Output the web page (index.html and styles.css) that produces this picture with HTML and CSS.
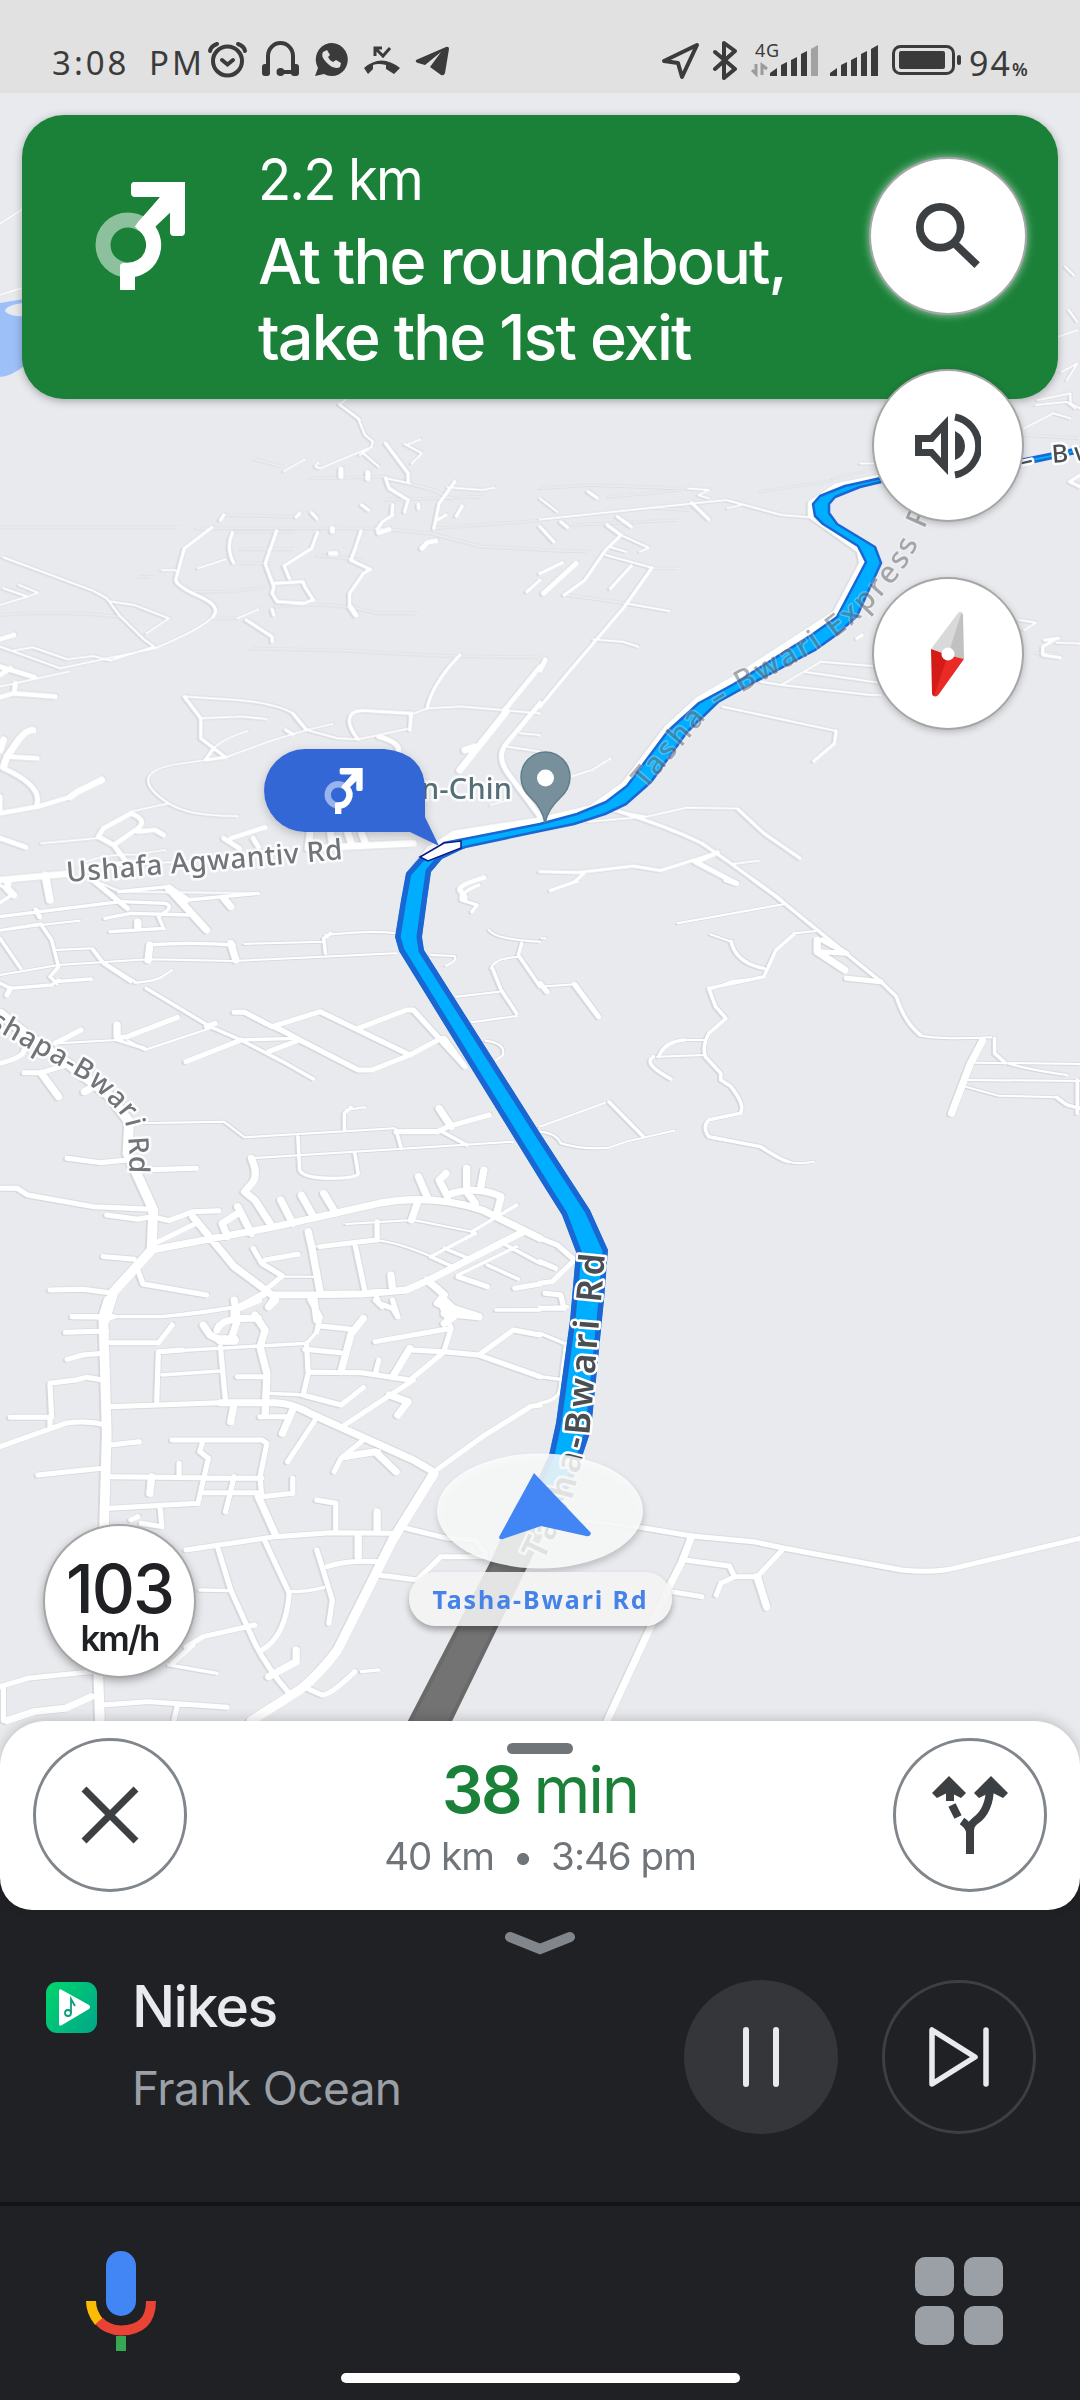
FILE: index.html
```html
<!DOCTYPE html>
<html lang="en">
<head>
<meta charset="utf-8">
<title>Navigation</title>
<link rel="stylesheet" href="styles.css">
</head>
<body>
<svg class="defs" width="0" height="0" aria-hidden="true">
  <symbol id="exit" viewBox="0 0 90 108">
    <path d="M33 88A25 25 0 0 1 33 38Q41 38 48 43" fill="none" stroke="#fff" stroke-opacity=".5" stroke-width="15"/>
    <path d="M33 88A25 25 0 0 0 52 46L50 44L80 9" fill="none" stroke="#fff" stroke-width="15"/>
    <path d="M41 45Q41 43 43 40L66 15H82V24L60 45L50 54Z" fill="#fff"/>
    <path d="M39 0H90V50Q90 54 86 54H79Q75 54 75 50V15H40Q36 15 36 11V4Q36 0 39 0Z" fill="#fff"/>
    <path d="M25 108V84q0-3 4-3h11v27z" fill="#fff"/>
  </symbol>
</svg>
<div class="phone">
  <header class="status">
    <span class="clock">3:08 PM</span>
    <svg class="status-left" viewBox="206 38 246 42">
      <g fill="none" stroke="#3b3b3b" stroke-width="4" stroke-linecap="round">
        <circle cx="227.500" cy="61" r="14.500"/><path d="M222 60l5.500 4.500L233 60M210 51q1-5 7-7M245 51q-1-5-7-7"/>
        <path d="M268 72V56a12.500 13 0 0 1 25 0v16M282 72h10"/>
      </g>
      <g fill="#3b3b3b">
        <rect x="262" y="64" width="8" height="12" rx="3"/><rect x="291" y="64" width="8" height="12" rx="3"/><circle cx="280.500" cy="72" r="4"/>
        <path d="M315 76l3-8A16 16.500 0 1 1 324 74z"/>
        <path d="M364 68q17-15 36 0l-6 6-8-5v-4q-8-2-13 0v4l-5 5z"/>
        <path d="M416 60Q415 62 418 63L425 65L441 52L430 67L441 75Q444 76 445 73L449 49Q449 46 446 47Z"/>
      </g>
      <path d="M323 52q-3 4 4 11t13 4l1-4-5-3-3 2q-4-2-5-5l2-2-3-5z" fill="#e1e1e1"/>
      <path d="M382 48h-7v8M375 48l8 8 7-8" fill="none" stroke="#3b3b3b" stroke-width="3"/>
    </svg>
    <svg class="status-right" viewBox="660 38 302 42">
      <path d="M664 61l33-16-15 32-4-14z" fill="none" stroke="#3b3b3b" stroke-width="4" stroke-linejoin="round"/>
      <path d="M715 52l20 17-11 9V43l11 8-20 18" fill="none" stroke="#3b3b3b" stroke-width="4" stroke-linejoin="round" stroke-linecap="round"/>
      <text class="net" x="755" y="57" textLength="24">4G</text>
      <path d="M756 64v10l-4-4M762 75V65l5 4" fill="none" stroke="#9b9b9b" stroke-width="3"/>
      <g fill="#3b3b3b">
        <path d="M770 76v-3l7-5v8zM781 76V65l6-3v14zM791 76V60l6-3v19zM801 76V54l6-3v25z"/>
        <path d="M811 76V49l7-4v31z" fill="#a2a2a2"/>
        <path d="M830 76v-3l7-5v8zM841 76V65l6-3v14zM851 76V60l6-3v19zM861 76V54l6-3v25zM871 76V49l7-4v31z"/>
        <rect x="899" y="51" width="46" height="18" rx="2"/><rect x="957" y="55" width="4" height="10" rx="2"/>
      </g>
      <rect x="893.500" y="46.500" width="60" height="27" rx="7" fill="none" stroke="#3b3b3b" stroke-width="3"/>
    </svg>
    <span class="battery">94<small>%</small></span>
  </header>

  <main class="map">
    <svg class="canvas" viewBox="0 93 1080 1707">
      <path d="M0 303L24 299V366Q12 376 0 377Z" fill="#9dc0f9"/>
      <path d="M24 303Q6 305 5 311Q9 317 24 316Z" fill="#e8eaee"/>
      <g class="roads">
        <!-- north-west -->
        <g transform="translate(0 0) scale(.3444 .3333)">
          <path class="a" d="M0 670L64 628M0 885L60 865M1005 1198L985 1213L1020 1240L1045 1260"/>
        </g>
        <g transform="translate(0 400) scale(.3444 .3333)">
          <path class="f" d="M0 382H520M570 385H1090L1250 400L1400 440L1568 448M740 178L820 200M900 235L1120 230M650 345L860 350M700 490H790M700 448H860M540 575Q680 580 780 560M0 645Q180 630 350 650M620 655H690M800 620Q960 600 1100 640H1210M730 745L1000 752L1290 768L1568 772M1185 250L1260 270L1320 300M1260 385L1568 362M1120 300L1400 290M400 530H440M680 395H860M1050 480L920 465"/>
          <path class="a" d="M825 213L885 178M925 188Q905 200 930 205L1080 140M1175 132L1225 160L1195 190M1180 135L1220 118M1300 262L1400 270L1435 263M1055 160L1100 200M1190 250L1120 235M985 13L1040 55L1060 105L1083 125L1078 140L1045 165M575 505L655 478M470 510H510M10 472L270 572L310 595L350 650L420 720L448 740L320 782L270 768L195 778L95 742L40 752M320 605L390 615L490 655L425 700M0 740L175 805L450 745Q580 690 618 650M0 860L200 815M10 565L80 590L110 578L55 555M0 615L80 590M690 655L750 628M535 890L690 900Q800 910 850 940L890 990L980 1015L1040 1018L1190 985V945L1240 925L1340 920L1568 940M580 955L700 950L775 957M595 1080L660 1070L780 1025L890 990L965 972M620 1045Q640 1020 718 993M600 1080L500 1095Q430 1110 430 1140T490 1210Q550 1250 690 1248M490 1210L380 1235M120 1330L280 1315M0 1435L190 1420M250 1385Q320 1360 390 1365L480 1350M370 1395L760 1370M270 1440L350 1475L490 1460L540 1490M1320 1300L1440 1290M1510 1000L1568 1005M1470 1040L1568 1055M1425 1215L1480 1200M350 1475L750 1480"/>
          <path class="b" d="M1120 130L1185 220V243M1120 235L1130 265L1185 300L1175 335M1260 385L1275 310L1320 245M1270 360L1295 345M1325 348L1342 318M1215 312V325M1050 315L1070 330M1140 315L1138 340M1140 345L1110 365L1095 388M640 360L650 345M860 350L870 340M905 338L920 355M615 382L535 445L510 540Q515 560 580 590T618 650M675 398Q655 440 678 488M803 393L770 490L795 560L790 580L805 605L880 610L910 600L885 560L880 545L800 550M922 397L905 445L825 497L840 535M1048 393L1030 450L1018 480L1075 508L1055 520L1015 580V620M535 890L583 955V1015L655 1072L600 1080M620 1045L595 1080M890 990L850 940M830 990L850 1003M1040 1018Q1010 980 1015 955T1060 932L1190 940M1240 925Q1255 850 1335 765M1195 940L1190 990M715 660L790 710V725M1568 540L1530 575M790 628L795 645"/>
          <path class="c" d="M990 207V230M1068 217V236M965 385V393M960 460H975M1225 445L1240 428L1265 423M1100 398L1130 388M1018 622L1033 645M0 800L100 832M0 825L30 805M0 892L40 880L160 890M40 880L45 850M0 718L40 705M380 1240Q430 1260 400 1285L330 1335L285 1310L300 1285L380 1240M330 1335L370 1390M400 1295L450 1290L475 1305M650 1315L695 1345M670 1315L770 1282M735 1315L750 1340M0 1315L75 1342M1465 930L1568 800M1568 910L1470 1030Q1440 1070 1475 1120L1568 1250M1100 1010Q1170 1030 1155 1060L1130 1075M1335 1470L1350 1490M1405 1433Q1345 1450 1335 1465L1350 1500M0 1240L110 1220L205 1190M10 1105Q130 1160 105 1220M20 1070L108 1075M0 1190V1240M240 1400L370 1390"/>
          <path class="d" d="M1335 1110L1470 935M1350 1050L1380 1040M10 1100L20 1070L40 1040Q70 990 95 990M0 1050L10 1020M205 1190L225 1175L295 1140M0 1440L190 1422M130 1425L145 1500M25 1440L20 1465L40 1485M490 1465L540 1500M900 1300L895 1345L1200 1330M960 1300L965 1330M1010 1300L1020 1330M1050 1300L1060 1325"/>
          <path class="e" d="M1200 1500V1420L1250 1350L1320 1305L1568 1265"/>
        </g>
        <!-- north-east -->
        <g transform="translate(540 0) scale(.3444 .3333)">
          <path class="a" d="M1525 800L1550 825M1535 930L1560 965M1505 1010L1560 990M1515 1115L1560 1090L1530 1140M1445 1200L1540 1180V1210L1568 1225"/>
        </g>
        <g transform="translate(540 400) scale(.3444 .3333)">
          <path class="f" d="M0 265L150 255L400 265M200 290L320 280L440 265M340 325L440 330M100 375L400 360M0 450L140 455M330 505H400M80 585L250 610M640 275L860 240M850 235L985 205M1405 105L1568 115M1500 760H1440"/>
          <path class="a" d="M0 358L540 300L700 345L790 352M430 265L490 270L460 285L490 295M0 295L50 335M545 325L590 313M250 610L375 633M155 718L240 725L285 740M200 440L250 455M235 405L315 443L290 455M190 465L325 503M640 845L700 855L815 785L990 800M700 855L960 885H990M530 920L860 993M765 815L1000 850M200 1230L310 1250L425 1223L575 1225M140 1265L310 1250M560 1392L635 1382M90 1130L150 1110L205 1075M1405 85L1490 40L1540 55M1440 15L1530 5L1555 25M1405 690L1440 668L1390 660M1500 728L1568 730M930 190H975"/>
          <path class="b" d="M0 920L80 820L245 620L325 503M70 585L130 540L190 450L235 405L195 375M0 520L65 488M205 565L265 497M0 380L40 425M225 350L265 380M140 275L165 293M440 308L490 358M60 365L80 382M230 1235Q370 1280 470 1330L540 1380L700 1500M575 1228L650 1300L755 1375M860 993L855 1030L795 1083M1568 225L1538 245L1568 260M1500 715L1460 740V765L1510 773M1505 715L1465 720M0 1415L110 1418L270 1398L350 1412L515 1358M130 1418L100 1445L30 1472M920 715L935 705"/>
          <path class="c" d="M10 580L105 490M0 810L15 780M455 1385L515 1358M450 1385L570 1450"/>
          <path class="d" d="M990 232L860 260L788 310V345L930 450L937 490L860 640L560 840L460 900L370 985L245 1155L150 1225L0 1262"/>
        </g>
        <!-- west -->
        <g transform="translate(0 880) scale(.3444 .3333)">
          <path class="a" d="M710 192L940 185M0 285L170 255L430 238L680 243L1150 220M945 165Q1080 150 1150 160M300 245L400 310M390 308Q450 305 470 290L500 270M160 210L270 205L300 245M0 152L120 135L230 122M170 490L340 480M1325 350L1450 335M1370 427L1500 408M1250 225L1320 228Q1330 240 1295 257M1410 482Q1470 490 1460 525L1440 540M395 730L650 725L710 772L1145 745M730 835L1490 785M1180 750H1270M1425 265Q1435 235 1505 230M1420 150Q1440 180 1568 185M120 130L0 150M370 480L420 510L610 445M1005 1032L1200 1020L1370 1055M915 1100L1090 1080Q1180 1090 1310 1158M820 1190H920M1440 1290L1568 1288M320 1310L480 1308L680 1280M1005 690L1060 682"/>
          <path class="b" d="M0 110L350 65L480 70Q510 80 460 110L475 145L320 155M305 115L380 100L550 105M345 35L490 20L545 60L750 40M160 305L265 297M0 310L30 325L150 315L170 300M120 135L150 180L170 260L145 290L165 310M270 210L300 250L380 305M430 195Q550 185 680 195M945 220L940 175L960 160M425 325L610 440L700 480L830 550L910 597M700 480L860 475M790 440L850 470M340 480L420 505M1000 750V700L1020 682M1430 265L1455 330L1500 400M1515 190L1505 225L1568 320M865 770L870 870Q880 895 960 895T1040 880L1030 820M1150 750L1165 805M1275 750L1355 795M1390 15Q1330 40 1340 60L1385 75L1370 95M0 15L40 40L0 68M0 175L60 265M1370 1055L1500 975M1250 1130L1380 1060M1250 1130L1310 1158M1290 1105L1360 1135M1415 1155L1505 1197M1330 1185L1500 1100M1460 1090L1568 1150"/>
          <path class="c" d="M270 0L370 85M680 397H710L790 440L930 395L1190 525L1280 475M800 440L870 480L1040 570H1080L1190 525M1040 445L1180 390H1200L1350 560M540 545L700 480M780 515L870 480M160 490L235 450M340 475L370 470L515 412M70 578H120L210 550M195 835L290 848L370 840M410 870L570 865M0 925H50L80 945L270 980L440 988M310 1005L400 1018L440 1010L490 1022L560 995L635 992M450 1090L570 1030M300 1130L390 1138M145 1230L240 1228L330 1240M400 1170L415 1212L600 1245M210 1310H310M735 1105L760 1150L820 1188L770 1230M770 1140L865 1123M1150 755L1270 755L1300 740L1420 705M1030 1090L1060 1235M1095 1080V1025M930 1100L1090 1080M330 1310L300 1320M0 550Q80 530 70 500M1415 1220L1330 1190M1495 1225L1568 1212M1090 1240L1100 1270L1140 1285L1155 1310M600 440L625 430M1290 475L1350 560M105 90L115 110M20 345L30 325"/>
          <path class="d" d="M135 0L145 60M490 25L600 150M650 55L670 80M400 125V140M430 240L435 195M670 190L685 240M340 435V470M120 580L170 650M245 635L280 615M1275 685L1310 740M730 835Q750 880 735 905L710 935L740 960L790 1040M780 1280L800 1250M660 1070L645 1030L690 1000M730 1060L690 980M850 1030L815 960M910 1010L875 945M975 1000L940 940M1240 950L1215 890M1300 950L1275 900L1295 880M1380 970L1355 935V865M1395 925L1405 870M1300 945Q1380 915 1455 950L1440 1010M1195 1020L1215 960M895 1055L905 1100L930 1240M1140 1230L1135 1185M440 1110L800 1040L1100 970Q1250 940 1400 990L1568 1075M560 1010L680 1160L790 1245L1050 1242L1180 1230Q1250 1200 1340 1150L1520 1055M1240 1200L1290 1245L1270 1270L1390 1310M910 1245L920 1320M680 1290L770 1240M680 1290V1320"/>
          <path class="e" d="M0 400Q80 470 190 545L320 650L375 725L370 820L445 990L440 1110L330 1235L305 1320"/>
        </g>
        <!-- east -->
        <g transform="translate(540 880) scale(.3444 .3333)">
          <path class="a" d="M400 130L710 72M495 163L555 185M0 320L100 313M0 740L190 668M0 755Q50 760 60 790Q120 810 200 803L250 785L390 752M340 530L480 525M420 480H480M560 302L490 330M640 295L560 302M740 160L800 153M500 775L640 800M490 720L585 700M1100 465Q1150 480 1310 472M1265 548L1568 552M1240 600L1568 603M1235 620L1330 647L1500 652M1350 548Q1420 570 1530 585M720 845Q750 855 795 845M5 175H15M30 30L110 5"/>
          <path class="b" d="M620 0L680 45L990 305L1035 350Q1060 430 1105 465M555 185Q570 250 650 265M740 160L685 210L650 290L490 325L510 380L540 415L490 460Q470 500 480 530L525 580V600L555 620Q600 680 580 700L490 720Q470 740 490 770L640 800Q700 840 720 845M420 480Q360 485 345 530M330 530Q295 550 380 597M200 665L300 770M1320 475V520L1350 548M1500 652L1530 675L1568 685M1560 600V700"/>
          <path class="c" d="M0 310L20 335M100 313L170 410M540 0L570 10M890 295L990 305M820 180L890 220L810 215M0 1075L50 1095L100 1140L35 1205L0 1210M0 1145L45 1165M15 1240L60 1245L70 1285H0"/>
          <path class="d" d="M805 180V215L885 270M1285 482L1250 550L1195 700"/>
        </g>
        <!-- south-west -->
        <g transform="translate(0 1300) scale(.3444 .3333)">
          <path class="b" d="M470 225L640 213M470 155L890 130L920 95M320 50H470Q600 40 690 20M1440 30H1568M490 1095L630 1120M1050 1115L1100 1110M580 870L670 872M840 875Q900 875 940 862M780 280L890 285"/>
          <path class="c" d="M210 50L310 52M190 97L310 93M320 128H460L500 75M195 178L240 165L300 160M0 440L190 370Q250 360 310 375M145 350V385M30 352H150L145 250L220 240L250 232L300 240M320 320L640 308M455 308L460 155L530 150M640 140L655 305M500 420H760L775 430L755 530L760 590L850 580V535M320 435L405 425M110 525L310 503M320 530L760 535M320 625L575 610L605 475L580 455L590 420M590 578H760M680 530L655 635M520 525V490M690 230H775M890 130L895 220L880 285L990 315L1055 262M905 217L1050 218L1190 240M930 78L1020 88M885 148L990 158M1090 125L1200 105L1310 85M1190 240L1290 155L1390 165L1568 230M1390 165L1490 90L1568 105M1290 150L1310 85L1275 0M1190 150L1290 155M1000 375L1140 280L1200 240M1260 515L1400 410L1540 320L1568 315M915 360L835 485M970 515L990 475L1060 415M990 475L1100 455M920 600L975 610V690M540 750L800 710L960 698L1140 700M630 735L670 870L740 1030Q780 1110 840 1180M770 725L840 880Q830 1010 760 1050M920 750L935 800L965 900L955 970M950 800Q1010 780 1100 785M1100 825L1210 840L1280 770L1410 770M1180 685L1300 715L1380 720L1410 760M540 1040L590 1010L740 975M880 1160L935 1185Q960 1185 1030 1115M300 1215L430 1205L660 1222M515 1215L505 1262M0 1160L80 1135L270 1115M10 1160V1262M380 660L400 650M900 0L930 50L920 95M1140 0L1155 50M1090 0L1110 20M560 1035L500 1090M755 350H840M410 670L470 680L465 620M1090 220L1100 180"/>
          <path class="d" d="M680 0L690 60L670 120M740 45L770 90L755 140L775 220L770 340M680 30L750 0M630 90Q640 50 750 55M590 75L610 105L640 120M780 20L800 0M1055 55L1020 100L990 215M1190 145L1140 230M1130 285L1185 305L1155 345M820 400L850 330M670 365L680 310M640 308H800Q850 310 900 340L1200 480L1250 510M1000 470L1090 455L1150 515M435 580L440 530M800 705L750 590M1040 770V710M1095 690V635M780 1130L860 1085V1050M20 1262L100 1235L190 1225L265 1190M1290 40L1390 50M1290 0L1330 40L1290 70"/>
          <path class="e" d="M315 0L300 50L310 400L302 690M285 1110L290 1262M1260 520L1140 720L980 1050Q930 1120 870 1170L730 1262M640 120H680"/>
        </g>
        <!-- south-east -->
        <g transform="translate(540 1300) scale(.3444 .3333)">
          <path class="b" d="M0 100L75 132M0 230L60 238M0 310Q50 300 58 270L75 132M0 25L80 20M120 663L200 670L440 708"/>
          <path class="c" d="M280 680L440 708L620 725L710 745L1050 810Q1150 820 1210 803L1568 715M420 780L550 798L565 830H630L705 748M380 875L470 890M635 830L658 925M565 830L525 850L512 885"/>
          <path class="d" d="M440 710L410 790L380 850L195 1262M630 830L658 920"/>
        </g>
      </g>

      <path class="passed" d="M518 1505L492 1563L408 1725H448L525 1567L552 1512Z"/>
      <path class="route-far" d="M881 478L845 486L820 496L813 504L815 516L823 524L858 546L866 562L837 617L813 634L734 684L699 703L668 731L627 786L606 802L577 814L540 824L444 843L425 860L465 847L540 831L574 824L605 814L626 804L651 782L687 732L718 702L747 686L815 650L836 635L857 616L881 563L875 547L837 524L829 513L829 504L835 497L860 487L881 482Z"/>
      <path class="route-far" d="M1020 460L1080 448V452L1020 465Z"/>
      <clipPath id="near"><path d="M444 843L420 857L406 873L401 900L395 937L399 951L540 1180L562 1215L576 1252L570 1320L556 1423L549 1455L515 1530H550L581 1460L591 1430L604 1300L608 1250L590 1210L540 1133L424 950L422 937L427 900L431 872L442 859L465 848Z"/></clipPath>
      <path class="route-near" clip-path="url(#near)" d="M444 843L420 857L406 873L401 900L395 937L399 951L540 1180L562 1215L576 1252L570 1320L556 1423L549 1455L515 1530H550L581 1460L591 1430L604 1300L608 1250L590 1210L540 1133L424 950L422 937L427 900L431 872L442 859L465 848Z"/>
      <path d="M420 857L444 843L461 841V848L428 861Z" fill="#fff" stroke="#0b1a8c" stroke-width="1.500"/>

      <path id="p1" d="M67 882L203 871L345 859" fill="none"/>
      <path id="p2" d="M-12 1026Q40 1055 82 1079Q110 1100 124 1119Q131 1140 129 1176" fill="none"/>
      <path id="p3" d="M645 790L692 735L712 711L743 692L813 653L838 636Q880 605 912 557L935 505" fill="none"/>
      <path id="p4" d="M543 1562L572 1500L590 1428L600 1310L606 1245" fill="none"/>
      <path id="p5" d="M1022 470L1053 463L1110 458" fill="none"/>
      <text class="label" font-size="28"><textPath href="#p1" textLength="277">Ushafa Agwantiv Rd</textPath></text>
      <text class="label" font-size="28"><textPath href="#p2" textLength="221">shapa-Bwari Rd</textPath></text>
      <text class="label fade" font-size="30"><textPath href="#p3" textLength="408">Tasha – Bwari Express R</textPath></text>
      <text class="label dark near" font-size="35"><textPath href="#p4" textLength="317">Tasha-Bwari Rd</textPath></text>
      <text class="label dark" font-size="25"><textPath href="#p5" textLength="74">– Bw</textPath></text>
      <text class="label poi" x="421" y="799" font-size="29" textLength="91">n-Chin</text>

      <path d="M545 823Q542 808 531 798Q521 789 521 777A24.500 25 0 0 1 570 777Q570 789 560 798Q548 809 545 823Z" fill="#78909c" stroke="#607d8b" stroke-width="1.500"/>
      <circle cx="545.500" cy="778" r="8.500" fill="#fff"/>

      <g class="bubble"><path d="M305 749H384Q425 753 425 790V817L439 846L410 832H305A41 41.500 0 0 1 305 749Z"/></g>
      <use href="#exit" x="324" y="768" width="39" height="46"/>

      <ellipse class="halo" cx="540" cy="1511" rx="103" ry="57.500"/>
      <path d="M534 1473L591 1533Q590 1537 586 1536L541 1526L503 1539Q499 1540 499 1537Z" fill="#4285f4"/>
    </svg>

    <section class="turn">
      <svg class="turn-icon"><use href="#exit"/></svg>
      <div class="turn-text"><p class="dist">2.2 km</p><p class="step">At the roundabout,<br>take the 1st exit</p></div>
    </section>
    <nav class="tools">
      <button class="round search"><svg viewBox="0 0 66 68"><circle cx="25" cy="25" r="21" fill="none" stroke="#3c4043" stroke-width="8"/><path d="M40 42l23 22" stroke="#3c4043" stroke-width="8"/></svg></button>
      <button class="round"><svg viewBox="0 0 66 66"><path d="M0 22H15L33 3V62L15 43H0ZM7 29V36H18L26 45V20L18 29Z" fill="#3c4043" fill-rule="evenodd"/><path d="M40 18q10 5 10 15t-10 14z" fill="#3c4043"/><path d="M40 4a29 29.500 0 0 1 0 58" fill="none" stroke="#3c4043" stroke-width="7"/></svg></button>
      <button class="round compass"><svg viewBox="0 0 36 86"><path d="M1 38L28 2Q31-1 33 3L18 44Z" fill="#d9d9d9"/><path d="M33 3L34 48L18 44L31 3Z" fill="#c1c1c1"/><path d="M1 38L18 44L7 85Q2 86 2 82Z" fill="#d31b17"/><path d="M34 48L18 44L4 85Q7 86 9 83Z" fill="#ea2a25"/><circle cx="18" cy="43" r="6.500" fill="#fff"/></svg></button>
    </nav>
    <div class="speed"><b>103</b><span>km/h</span></div>
    <div class="road-name">Tasha-Bwari Rd</div>
  </main>

  <section class="sheet">
    <button class="ring"><svg viewBox="0 0 58 58"><path d="M3 3L55 55M55 3L3 55" stroke="#3c4043" stroke-width="7"/></svg></button>
    <div class="eta"><i class="grip"></i><p class="time"><b>38</b> min</p><p class="trip">40 km&ensp;•&ensp;3:46 pm</p></div>
    <button class="ring"><svg class="fork" viewBox="0 0 76 78"><path d="M38 78V55Q38 49 43 45Q58 35 58 10" fill="none" stroke="#3c4043" stroke-width="8"/><path d="M38 55Q36 49 30 45M26 41L20 29M18 25V10" fill="none" stroke="#3c4043" stroke-width="8"/><path d="M17 0L34 17L29 22L17 16L5 22L0 17ZM59 0L76 17L71 22L59 16L47 22L42 17Z" fill="#3c4043"/></svg></button>
  </section>

  <section class="player">
    <svg class="chevron" viewBox="0 0 70 23"><path d="M5 5L35 17L65 5" fill="none" stroke="#80868b" stroke-width="10" stroke-linecap="round"/></svg>
    <div class="row">
      <svg class="app" viewBox="0 0 51 51"><defs><linearGradient id="g" x2="1" y2=".7"><stop stop-color="#00d66b"/><stop offset="1" stop-color="#00ac87"/></linearGradient></defs><rect width="51" height="51" rx="11" fill="url(#g)"/><path d="M13 9Q13 6 16 8L43 23Q45 25 43 27L16 43Q13 45 13 42Z" fill="#fff"/><circle cx="22" cy="31" r="3" fill="none" stroke="#08a078" stroke-width="1.800"/><path d="M25 31V17l4 7" fill="none" stroke="#08a078" stroke-width="1.800"/></svg>
      <div class="song"><p class="title">Nikes</p><p class="artist">Frank Ocean</p></div>
      <button class="disc"><svg viewBox="0 0 36 60"><path d="M3 3V57M33 3V57" stroke="#e8eaed" stroke-width="6" stroke-linecap="round"/></svg></button>
      <button class="disc outline"><svg viewBox="0 0 60 60"><path d="M3 3V57L46 30ZM57 3V57" fill="none" stroke="#e8eaed" stroke-width="5.500" stroke-linecap="round" stroke-linejoin="round"/></svg></button>
    </div>
  </section>

  <footer class="dock">
    <svg class="mic" viewBox="0 0 70 100"><rect x="20" width="30" height="65" rx="15" fill="#4285f4"/><path d="M5 50Q5 61 13 71" fill="none" stroke="#fbbc04" stroke-width="10"/><path d="M65 50Q65 79 35 79.500Q21 79 13 70" fill="none" stroke="#ea4335" stroke-width="10"/><path d="M35 85V100" stroke="#34a853" stroke-width="10"/></svg>
    <div class="apps"><i></i><i></i><i></i><i></i></div>
  </footer>
  <div class="home"></div>
</div>
</body>
</html>
```

FILE: styles.css
```css
* { box-sizing: border-box; }
body { margin: 0; background: #202124; font-family: Inter, "Open Sans", sans-serif; }
p { margin: 0; white-space: nowrap; }
button { padding: 0; border: 0; background: none; display: flex; align-items: center; justify-content: center; }
.defs { position: absolute; }
.phone { width: 1080px; height: 2400px; display: flex; flex-direction: column; background: #202124; overflow: hidden; }

.status { height: 93px; flex: none; background: #e1e1e1; color: #3b3b3b; display: flex; align-items: flex-start; padding: 38px 0 0 52px; font-family: "Noto Sans", sans-serif; }
.clock { width: 154px; font-size: 33px; line-height: 50px; letter-spacing: 3px; white-space: pre; word-spacing: 8px; }
.status-left { width: 246px; height: 42px; }
.status-right { width: 302px; height: 42px; margin-left: 208px; }
.net { font-size: 18px; fill: #3b3b3b; }
.battery { margin-left: 7px; font-size: 34px; line-height: 50px; letter-spacing: 2px; }
.battery small { font-size: 18px; letter-spacing: 0; font-weight: 600; }

.map { position: relative; flex: none; height: 1707px; background: #e8eaee; }
.canvas { position: absolute; inset: 0; width: 1080px; height: 1707px; }
.roads { fill: none; stroke: #fff; stroke-linecap: round; stroke-linejoin: round; filter: drop-shadow(-1.500px 1px .5px rgba(60,64,80,.1)) drop-shadow(1px -.5px .5px rgba(60,64,80,.07)); }
.f { stroke: #f1f2f4; stroke-width: 2.500; }
.a { stroke-width: 6; }
.b { stroke-width: 10; }
.c { stroke-width: 15; }
.d { stroke-width: 21; }
.e { stroke-width: 28; }
.passed { fill: #737373; stroke: #6a6a6a; stroke-width: 4; }
.route-far { fill: #00aeff; stroke: #1a66d2; stroke-width: 2.500; stroke-linejoin: round; }
.route-near { fill: #00aeff; stroke: #1a66d2; stroke-width: 11; }
.label { font-family: "Noto Sans", sans-serif; font-weight: 500; fill: #70757a; stroke: #fff; stroke-opacity: .85; stroke-width: 5; stroke-linejoin: round; paint-order: stroke; }
.fade { fill: #3c4043; fill-opacity: .42; stroke-width: 3; stroke-opacity: .25; }
.dark { fill: #4a4e52; stroke-opacity: 1; }
.near { font-weight: 600; }
.poi { fill: #546e7a; }
.bubble { fill: #3367d6; filter: drop-shadow(0 3px 5px rgba(0,0,0,.2)); }
.halo { fill: #fbfdfd; fill-opacity: .86; filter: drop-shadow(1px 4px 3px rgba(0,0,0,.2)); }

.turn { position: relative; margin: 0 22px; top: 22px; height: 284px; border-radius: 42px; background: #1b8139; color: #fff; display: flex; padding: 0 0 0 73px; box-shadow: 0 2px 8px rgba(0,0,0,.3); }
.turn-icon { width: 90px; height: 108px; margin-top: 67px; flex: none; }
.turn-text { margin-left: 73px; padding-top: 29px; }
.dist { font-size: 58px; line-height: 70px; letter-spacing: -2px; transform: scaleX(.94); transform-origin: left; }
.step { font-size: 63px; line-height: 76px; font-weight: 500; letter-spacing: -1.900px; margin-top: 9px; }

.tools { position: absolute; left: 869px; top: 64px; display: flex; flex-direction: column; align-items: center; }
.round { width: 152px; height: 153px; border-radius: 50%; background: #fff; border: 2px solid #a6a6a6; box-shadow: 0 2px 7px rgba(0,0,0,.22); margin-bottom: 55px; }
.round svg { width: 66px; height: 66px; }
.round.search { width: 158px; height: 158px; margin-bottom: 54px; box-shadow: 0 0 8px rgba(255,255,255,.6); }
.compass svg { width: 36px; height: 86px; }
.speed { position: absolute; left: 43px; top: 1431px; width: 153px; height: 154px; border-radius: 50%; border: 2px solid #a6a6a6; background: #fff; box-shadow: 0 3px 8px rgba(0,0,0,.3); color: #202124; display: flex; flex-direction: column; align-items: center; padding-top: 28px; }
.speed b { font-size: 67px; line-height: 70px; font-weight: 500; letter-spacing: -2px; }
.speed span { font-size: 35px; line-height: 36px; font-weight: 600; letter-spacing: -2px; margin-top: -4px; }
.road-name { position: absolute; left: 409px; top: 1479px; width: 263px; height: 54px; border-radius: 27px; background: rgba(244,244,244,.88); box-shadow: 0 4px 6px rgba(0,0,0,.3); color: #4583e8; font: 700 25px/54px "Noto Sans", sans-serif; letter-spacing: 1.900px; text-align: center; white-space: nowrap; }

.sheet { position: relative; flex: none; height: 189px; margin-top: -79px; border-radius: 46px 46px 32px 32px; background: #fff; display: flex; justify-content: space-between; padding: 17px 33px; box-shadow: 0 -2px 12px rgba(0,0,0,.18); }
.ring { width: 154px; height: 154px; border: 3px solid #80868b; border-radius: 50%; }
.ring svg { width: 58px; height: 58px; }
.ring .fork { width: 76px; height: 78px; }
.eta { display: flex; flex-direction: column; align-items: center; padding-top: 5px; }
.grip { width: 66px; height: 11px; border-radius: 6px; background: #70757a; }
.time { color: #1b8139; font-size: 65px; line-height: 72px; letter-spacing: -2.200px; word-spacing: -3px; }
.time b { font-weight: 600; }
.trip { color: #70757a; font-size: 38.500px; line-height: 48px; letter-spacing: -1px; margin-top: 6px; }

.player { flex: none; height: 292px; display: flex; flex-direction: column; align-items: center; padding-top: 22px; }
.chevron { width: 70px; height: 23px; }
.row { width: 1080px; display: flex; padding: 25px 44px 0 46px; align-items: flex-start; }
.app { width: 51px; height: 51px; margin-top: 2px; }
.song { flex: 1; padding-left: 35px; margin-top: -3px; }
.title { font-size: 57px; line-height: 60px; font-weight: 500; color: #e8eaed; letter-spacing: -1.500px; }
.artist { font-size: 46px; line-height: 60px; color: #9aa0a6; margin-top: 21px; letter-spacing: -.6px; }
.disc { width: 154px; height: 154px; border-radius: 50%; background: #35363a; }
.disc svg { height: 60px; width: 36px; }
.outline { margin-left: 44px; background: none; border: 3px solid #3c4043; }
.outline svg { width: 60px; }

.dock { flex: none; height: 171px; border-top: 4px solid #131416; display: flex; justify-content: space-between; padding: 45px 77px 0 86px; }
.mic { width: 70px; height: 100px; }
.apps { display: grid; grid-template-columns: 39px 39px; grid-auto-rows: 39px; gap: 10px; padding-top: 6px; }
.apps i { background: #9aa0a6; border-radius: 10px; }
.home { width: 399px; height: 10px; border-radius: 5px; background: #fff; align-self: center; }
```
